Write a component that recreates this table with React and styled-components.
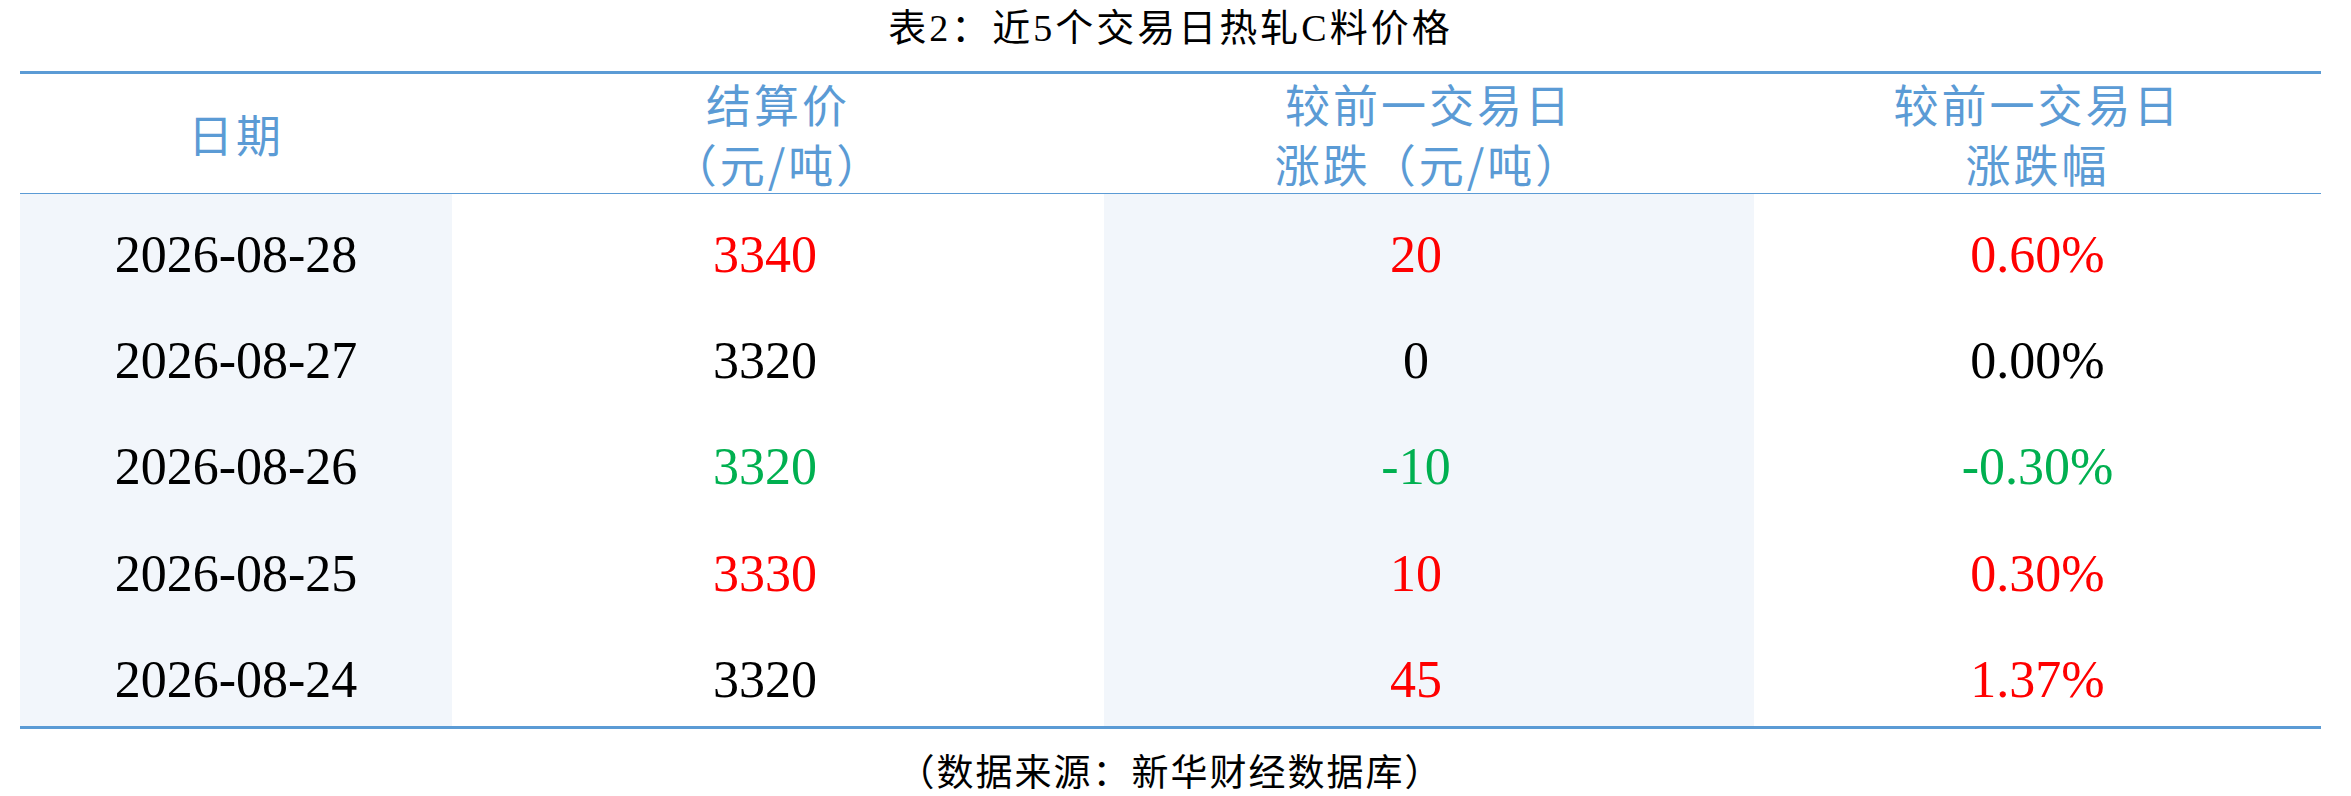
import React from 'react';
import styled, { createGlobalStyle } from 'styled-components';

const GlobalStyle = createGlobalStyle`
  html, body {
    margin: 0;
    padding: 0;
    background: #ffffff;
  }
  body {
    font-family: "Noto Sans CJK SC", "Noto Sans", sans-serif;
  }
`;

const Page = styled.div`
  width: 2351px;
  height: 796px;
  padding-left: 20px;
  box-sizing: border-box;
  overflow: hidden;
`;

const Title = styled.div`
  width: 2301px;
  height: 56px;
  line-height: 56px;
  margin-bottom: 15px;
  text-align: center;
  font-family: "Liberation Serif", "Noto Sans CJK SC", serif;
  font-size: 38px;
  letter-spacing: 3px;
  color: #000;
`;

const Table = styled.div`
  width: 2301px;
  display: grid;
  grid-template-columns: 432px 652px 650px 567px;
  border-top: 3px solid #5b9bd5;
  border-bottom: 3px solid #5b9bd5;
`;

const HeadCell = styled.div`
  height: 119px;
  display: flex;
  flex-direction: column;
  align-items: center;
  justify-content: center;
  border-bottom: 1px solid #5b9bd5;
  font-family: "Noto Sans CJK SC", sans-serif;
  font-size: 45px;
  line-height: 60px;
  letter-spacing: 3px;
  color: #5b9bd5;
  white-space: nowrap;
`;

const Cell = styled.div`
  height: 106.4px;
  box-sizing: border-box;
  padding-top: 14px;
  padding-right: ${(p) => (p.$inset ? '26px' : '0')};
  display: flex;
  align-items: center;
  justify-content: center;
  background: ${(p) => (p.$shaded ? '#f2f6fb' : '#ffffff')};
  font-family: "Liberation Serif", "Noto Sans CJK SC", serif;
  font-size: 52px;
  color: ${(p) => p.$tone};
`;

const Footer = styled.div`
  width: 2301px;
  margin-top: 16px;
  line-height: 50px;
  text-align: center;
  font-family: "Noto Sans CJK SC", sans-serif;
  font-size: 37px;
  letter-spacing: 2px;
  color: #000;
`;

const RED = '#ff0000';
const GREEN = '#00b050';
const BLACK = '#000000';

const headers = [
  ['日期'],
  ['结算价', '（元/吨）'],
  ['较前一交易日', '涨跌（元/吨）'],
  ['较前一交易日', '涨跌幅'],
];

const rows = [
  { date: '2026-08-28', price: '3340', priceTone: RED, diff: '20', pct: '0.60%', tone: RED },
  { date: '2026-08-27', price: '3320', priceTone: BLACK, diff: '0', pct: '0.00%', tone: BLACK },
  { date: '2026-08-26', price: '3320', priceTone: GREEN, diff: '-10', pct: '-0.30%', tone: GREEN },
  { date: '2026-08-25', price: '3330', priceTone: RED, diff: '10', pct: '0.30%', tone: RED },
  { date: '2026-08-24', price: '3320', priceTone: BLACK, diff: '45', pct: '1.37%', tone: RED },
];

const App = () => (
  <Page>
    <GlobalStyle />
    <Title>表2：近5个交易日热轧C料价格</Title>
    <Table>
      {headers.map((lines, i) => (
        <HeadCell key={i}>
          {lines.map((line) => (
            <span key={line}>{line}</span>
          ))}
        </HeadCell>
      ))}
      {rows.map((r) => (
        <React.Fragment key={r.date}>
          <Cell $shaded $tone={BLACK}>{r.date}</Cell>
          <Cell $inset $tone={r.priceTone}>{r.price}</Cell>
          <Cell $inset $shaded $tone={r.tone}>{r.diff}</Cell>
          <Cell $tone={r.tone}>{r.pct}</Cell>
        </React.Fragment>
      ))}
    </Table>
    <Footer>（数据来源：新华财经数据库）</Footer>
  </Page>
);

export default App;
